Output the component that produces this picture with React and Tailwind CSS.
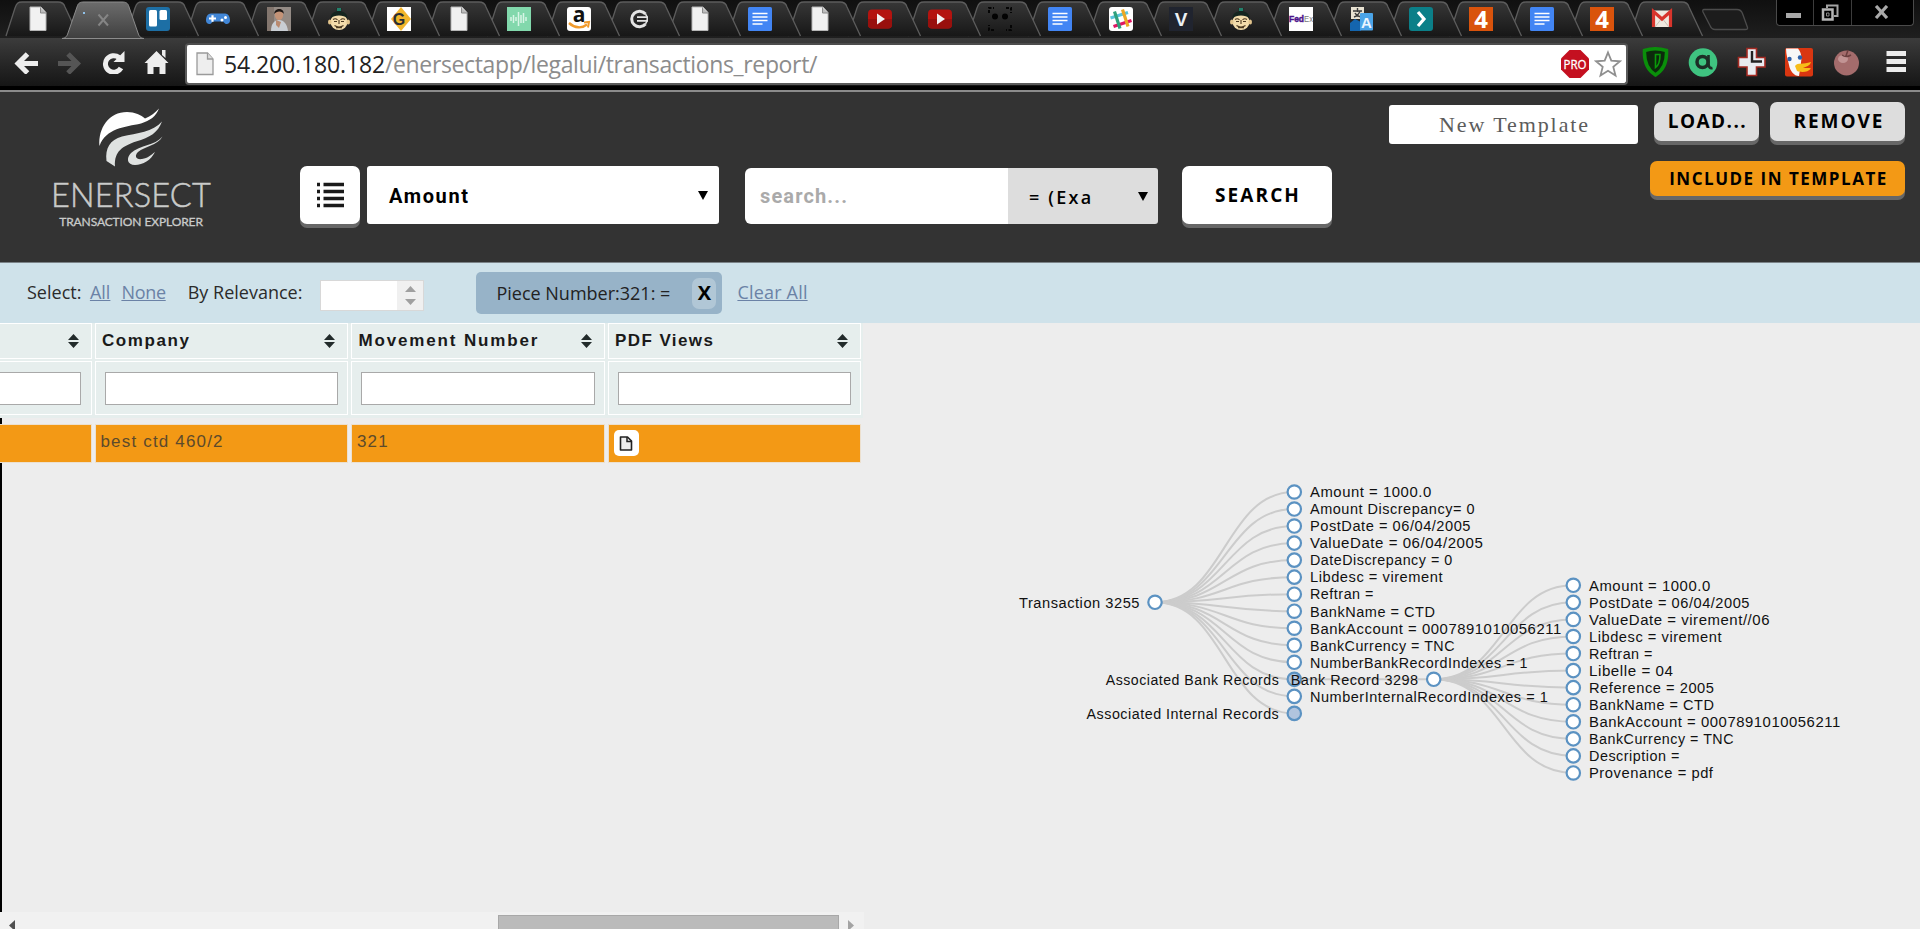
const favSerif = "Liberation Sans, sans-serif";

function PageFav() {
  return (
    <>
      <path d="M4 0h11l5 5.500V23.500H4z" fill="#f1f1f1" stroke="#b5b5b5" strokeWidth="1" />
      <path d="M14.500 0.500v5.500H20" fill="#bdbdbd" stroke="#8a8a8a" strokeWidth="1" />
    </>
  );
}

function DocFav() {
  return (
    <>
      <rect x="0" y="0" width="24" height="24" rx="1.500" fill="#4285f4" />
      <path d="M4.500 6.500h15M4.500 10h15M4.500 13.500h15M4.500 17h10" stroke="#fff" strokeWidth="1.700" />
    </>
  );
}

function YoutubeFav() {
  return (
    <>
      <rect x="0" y="2.500" width="24" height="19" rx="4" fill="#b4130f" />
      <path d="M0 12h24v5.500a4 4 0 0 1-4 4H4a4 4 0 0 1-4-4z" fill="#98100d" />
      <path d="M9 6.500l8 5.500-8 5.500z" fill="#f2f2f2" />
    </>
  );
}

function FaceFav() {
  return (
    <>
      <ellipse cx="12" cy="15" rx="8.500" ry="8" fill="#f3dcab" />
      <ellipse cx="2.800" cy="15" rx="1.800" ry="2.500" fill="#e2c48c" />
      <ellipse cx="21.200" cy="15" rx="1.800" ry="2.500" fill="#e2c48c" />
      <path d="M3.500 11C3.500 6 8 5 10 4l-.5-3h5L14 4c2 1 6.500 2 6.500 7-4-3.500-13-3.500-17 0z" fill="#15251f" />
      <path d="M10 1h4v3h-4z" fill="#23806b" />
      <path d="M6 12.500c1.500-1 3-1 4.500.3M13.500 12.800c1.500-1.300 3-1.300 4.500-.3M7 14.500h3M14 14.500h3M12 13v4M7.500 18.500c3 2 6 2 9 0M9 20.800h6" stroke="#4a3820" strokeWidth="1.100" fill="none" />
    </>
  );
}

function FourFav() {
  return (
    <>
      <rect width="24" height="24" fill="#d9530c" />
      <text x="12" y="20.500" textAnchor="middle" fontSize="24" fontWeight="700" fill="#fff" fontFamily="Open Sans, sans-serif">4</text>
    </>
  );
}

const favs = {
  page: <PageFav />,
  doc: <DocFav />,
  youtube: <YoutubeFav />,
  face: <FaceFav />,
  four: <FourFav />,
  trello: (
    <>
      <rect width="24" height="24" rx="3" fill="#1d6fa5" />
      <rect x="3" y="3" width="8" height="16.500" rx="1.500" fill="#fff" />
      <rect x="13.500" y="3" width="7.500" height="10" rx="1.500" fill="#fff" />
    </>
  ),
  game: (
    <>
      <path d="M5 6.500h14c4 0 5 4 5 7s-3 4.500-5 3l-2-2H7l-2 2c-2 1.500-5 0-5-3s1-7 5-7z" fill="#4186d6" />
      <path d="M3 11.500h7M6.500 8.200v6.600" stroke="#fff" strokeWidth="2.200" />
      <circle cx="16" cy="13" r="1.500" fill="#fff" />
      <circle cx="19.500" cy="10.500" r="1.500" fill="#fff" />
    </>
  ),
  photo: (
    <>
      <rect width="24" height="24" fill="#948b85" />
      <path d="M0 0h7v24H0z" fill="#83766e" />
      <path d="M4 24c0-7 3-11 8-11s8 4 9 11z" fill="#c9ced4" />
      <ellipse cx="12" cy="7.500" rx="4.200" ry="5.500" fill="#c49377" />
      <path d="M7.300 7C7 1 17 0 16.800 7c-1.500-3.500-7.500-3.500-9.500 0z" fill="#1d1715" />
      <path d="M9 13l5 2-2 6-3-3z" fill="#b98a70" />
    </>
  ),
  gdiamond: (
    <>
      <rect width="24" height="24" fill="#fff" />
      <path d="M14 0l10 12-10 12-10-12z" fill="#f3b52c" />
      <text x="12" y="18" textAnchor="middle" fontSize="16" fontWeight="700" fill="#2b2f36" fontFamily={favSerif}>G</text>
    </>
  ),
  wave: (
    <>
      <rect width="24" height="24" fill="#82d8ac" />
      <path d="M4 10v4M6.500 8v8M9 10v4M11.500 5v14M14 8v8M16.500 6v10M19 10v4" stroke="#d8f5e6" strokeWidth="1.500" />
    </>
  ),
  amazon: (
    <>
      <rect width="24" height="24" rx="3" fill="#fff" />
      <text x="12" y="15" textAnchor="middle" fontSize="21" fontWeight="700" fill="#111" fontFamily="Open Sans, sans-serif">a</text>
      <path d="M2 16c6 5.500 13 5.500 18 1.500" stroke="#f19a2b" strokeWidth="2.400" fill="none" />
      <path d="M17 15.500l5-.5-1 5.500" stroke="#f19a2b" strokeWidth="2" fill="none" />
    </>
  ),
  coin: (
    <>
      <path d="M18.500 7A7.800 7.800 0 1 0 18.500 17" fill="none" stroke="#e4e4e4" strokeWidth="3" />
      <path d="M10 10.200h11M10 13.800h11" stroke="#e4e4e4" strokeWidth="1.800" />
      <path d="M18.500 7q2 2.500 1.800 5t-1.800 5" fill="none" stroke="#e4e4e4" strokeWidth="1.500" />
    </>
  ),
  frame: (
    <>
      <path d="M1 6V1h5M18 1h5v5M23 18v5h-5M6 23H1v-5" stroke="#050505" strokeWidth="2" fill="none" strokeDasharray="3 1.500" />
      <circle cx="7" cy="9.500" r="3" fill="#030303" />
      <circle cx="17" cy="9.500" r="3" fill="#030303" />
    </>
  ),
  slack: (
    <>
      <rect width="24" height="24" rx="3" fill="#fff" />
      <path d="M1.500 11L19 5.500" stroke="#5bc4dc" strokeWidth="3.200" />
      <path d="M4.500 19.500L22.500 13.500" stroke="#e01563" strokeWidth="3.200" />
      <path d="M5.500 4.500l5.500 17" stroke="#2fa07c" strokeWidth="3.200" />
      <path d="M13.500 2.500l5.500 17" stroke="#eba826" strokeWidth="3.200" />
    </>
  ),
  vee: (
    <>
      <rect width="24" height="24" fill="#20242f" />
      <text x="12" y="19" textAnchor="middle" fontSize="19" fontWeight="700" fill="#eceff3" fontFamily={favSerif}>V</text>
    </>
  ),
  fedex: (
    <>
      <rect width="24" height="24" fill="#fff" />
      <text x="0" y="15" fontSize="9.500" fontWeight="700" textLength="15" lengthAdjust="spacingAndGlyphs" fill="#4d148c" stroke="#4d148c" strokeWidth="0.500" fontFamily={favSerif}>Fed</text>
      <text x="15" y="15" fontSize="9.500" textLength="9" lengthAdjust="spacingAndGlyphs" fill="#777" fontFamily={favSerif}>Ex</text>
    </>
  ),
  translate: (
    <>
      <path d="M2 0h13v12H2z" fill="#e8e2d2" />
      <path d="M4 4h9M8.500 1v4M5 10c3-1 5-3 6-6M6 6c1 2 3 3.500 6 4" stroke="#3d3d3d" strokeWidth="1.400" fill="none" />
      <path d="M1 24v-8l5-4 6 3v9z" fill="#1465ae" />
      <rect x="11" y="6" width="13" height="17.500" rx="1" fill="#4aa4e8" />
      <text x="17.500" y="21" textAnchor="middle" fontSize="15" fontWeight="700" fill="#eaf5ff" fontFamily={favSerif}>A</text>
    </>
  ),
  chevron: (
    <>
      <rect width="24" height="24" rx="3" fill="#0b7f88" />
      <path d="M9 5l6 7-6 7" stroke="#fff" strokeWidth="3.200" fill="none" />
    </>
  ),
  gmail: (
    <>
      <rect x="2" y="3.500" width="20" height="16.500" fill="#efe9df" />
      <path d="M3.500 20V4.500L12 12l8.500-7.500V20" stroke="#d8352c" strokeWidth="3.200" fill="none" />
      <path d="M5 20l5.500-7M19 20l-5.500-7" stroke="#c8c0b4" strokeWidth="1" />
    </>
  ),
};

const tabs = [
  "page", "active", "trello", "game", "photo", "face", "gdiamond", "page", "wave", "amazon",
  "coin", "page", "doc", "page", "youtube", "youtube", "frame", "doc", "slack", "vee",
  "face", "fedex", "translate", "chevron", "four", "doc", "four", "gmail",
];

function Tab({ kind, index }) {
  const active = kind === "active";
  return (
    <div className="relative flex h-[38px] w-[60.15px] shrink-0 justify-center pt-[7px]" style={{ zIndex: active ? 60 : 40 - index }}>
      <svg className="absolute top-0 -left-[10px] h-[38px] w-[90px] overflow-visible" viewBox="0 0 90 38">
        {active ? (
          <path d="M4 38.500C8 38 9 36 10 33L19 7c1-4 3-5 7-5h38c4 0 6 1 7 5l9 26c1 3 2 5 6 5.500z" fill="url(#tab-active)" stroke="#8c8c8c" strokeWidth="1" />
        ) : (
          <path d="M8 36L17 8c1.500-4.500 3-6 7-6h36c4 0 6 1.500 7 5l13.500 29" fill="url(#tab-idle)" stroke="#5c5c5c" strokeWidth="1.300" />
        )}
      </svg>
      {active ? (
        <svg className="relative h-6 w-10" viewBox="0 0 40 24">
          <rect x="5" y="5" width="2" height="2" fill="#8fc0e8" />
          <path d="M20.500 7.500l9.500 11M30 7.500l-9.500 11" stroke="#858585" strokeWidth="2" />
        </svg>
      ) : (
        <svg className="relative h-6 w-6 overflow-visible" viewBox="0 0 24 24">{favs[kind]}</svg>
      )}
    </div>
  );
}

function TabStrip() {
  return (
    <div className="flex h-[38px] bg-gradient-to-b from-[#101010] to-[#1f1f1f] pl-[8px]">
      <svg className="absolute h-0 w-0">
        <defs>
          <linearGradient id="tab-idle" x1="0" x2="0" y1="0" y2="1">
            <stop offset="0" stopColor="#373737" />
            <stop offset="1" stopColor="#171717" />
          </linearGradient>
          <linearGradient id="tab-active" x1="0" x2="0" y1="0" y2="1">
            <stop offset="0" stopColor="#6c6c6c" />
            <stop offset="1" stopColor="#3f3f3f" />
          </linearGradient>
        </defs>
      </svg>
      {tabs.map((kind, i) => <Tab key={i} kind={kind} index={i} />)}
      <svg className="ml-[9px] h-[38px] w-[48px]" viewBox="0 0 48 38">
        <path d="M3 9.500h33q4 0 5.500 4l5 14q.5 2-2 2H14q-3.500 0-5-4L2 12q-.8-2.500 1-2.500z" fill="#1c1c1c" stroke="#4c4c4c" strokeWidth="1.300" />
      </svg>
      <div className="mr-[6px] ml-auto flex h-[26px] w-[138px] rounded-b-[4px] border border-t-0 border-[#4a4a4a] bg-black">
        <div className="flex w-[37px] border-r border-[#3c3c3c]">
          <div className="mt-[13px] ml-[9px] h-[5px] w-[15px] bg-[#a9a9a9]" />
        </div>
        <div className="flex w-[38px] border-r border-[#3c3c3c]">
          <svg className="mt-[4px] ml-[7px] h-[18px] w-[18px]" viewBox="0 0 18 18">
            <path d="M6 4V1.500h10.500V12H13" fill="none" stroke="#a3a3a3" strokeWidth="2" />
            <path d="M2 5.500h9.500v10H2z" fill="none" stroke="#b5b5b5" strokeWidth="2.500" />
            <path d="M5.500 9h2.500v3H5.500z" fill="none" stroke="#8a8a8a" />
          </svg>
        </div>
        <svg className="mt-[5px] ml-[22px] h-[14px] w-[15px]" viewBox="0 0 15 14">
          <path d="M2 1l11 12M13 1L2 13" stroke="#a9a9a9" strokeWidth="3.200" />
        </svg>
      </div>
    </div>
  );
}

function Toolbar() {
  return (
    <div className="h-[54px] bg-black">
      <div className="flex h-[48px] items-center bg-gradient-to-b from-[#3c3c3c] to-[#161616]">
        <svg className="ml-[14px] h-[24px] w-[156px]" viewBox="0 0 156 24">
          <g fill="none" stroke="#ededed" strokeWidth="5">
            <path d="M24 13.500H4M13.500 4l-9.500 9.500L13.500 23" />
            <path d="M44 13.500h19M54 4l9.500 9.500L54 23" stroke="#555" />
            <path d="M105 7.500a8.300 8.300 0 1 0 2 10.500" />
          </g>
          <path d="M110.500 1v11h-11z" fill="#ededed" />
          <path d="M142.500 1l12 12h-3v11h-6v-7h-6v7h-6V13h-3z" fill="#ededed" />
          <path d="M148 0h3.500v8l-3.500-3z" fill="#ededed" />
        </svg>
        <div className="mt-[4px] ml-[15px] flex h-[42px] w-[1443px] items-center rounded-[4px] border-2 border-[#5a5a5a] border-t-[#4d4d4d] bg-white pl-[9px]">
          <svg className="h-[24px] w-[18px]" viewBox="0 0 18 24">
            <path d="M1 1h10.500l5.500 6v15.500H1z" fill="#eee" stroke="#9a9a9a" strokeWidth="1.300" />
            <path d="M11.500 1v6H17" fill="#ddd" stroke="#9a9a9a" strokeWidth="1.300" />
          </svg>
          <p className="ml-[10px] font-['Open_Sans',sans-serif] text-[23px] leading-none tracking-[-0.360px] whitespace-nowrap text-[#8c8c8c]">
            <span className="tracking-[-0.130px] text-[#222]">54.200.180.182</span>/enersectapp/legalui/transactions_report/
          </p>
          <svg className="ml-auto h-[28px] w-[28px]" viewBox="0 0 28 28">
            <path d="M8.500 0h11L28 8.500v11L19.500 28h-11L0 19.500v-11z" fill="#c41020" />
            <text x="14" y="18.500" textAnchor="middle" fontSize="12" textLength="23" lengthAdjust="spacingAndGlyphs" fill="#fff" stroke="#fff" strokeWidth="0.300" fontFamily="Open Sans, sans-serif">PRO</text>
          </svg>
          <svg className="mr-[4px] ml-[5px] h-[28px] w-[28px]" viewBox="0 0 28 28">
            <path d="M14 2.500l3.300 8.200 8.700.6-6.700 5.600 2.200 8.600-7.500-4.800-7.500 4.800 2.200-8.600L2 11.300l8.700-.6z" fill="#fff" stroke="#8f8f8f" strokeWidth="1.800" />
          </svg>
        </div>
        <svg className="ml-[14px] h-[30px] w-[268px]" viewBox="0 0 268 30">
          <path d="M2.500 3.500Q13 0 24.500 3.500C25 15 22 23 13.500 28 5 23 2 15 2.500 3.500z" fill="#0c2a0c" stroke="#0a8f0a" strokeWidth="3.500" />
          <path d="M13.500 7.500h4.500c0 6-1 11-4.500 13z" fill="none" stroke="#0a9a0a" strokeWidth="1.600" />
          <circle cx="61" cy="15.500" r="14.300" fill="#3fc380" />
          <circle cx="60.500" cy="15" r="5.500" fill="none" stroke="#1d2e26" strokeWidth="3.500" />
          <path d="M66.500 8v9q.5 5 4 4" fill="none" stroke="#1d2e26" strokeWidth="2.600" />
          <path d="M105 1.500h9.500v9h8.500v9.500h-8.500v8.500H105v-8.500H96.500V10.500h8.500z" fill="#e8ebf0" stroke="#a32a22" strokeWidth="1.600" />
          <path d="M110 4v10.500h10" fill="none" stroke="#222" strokeWidth="2.400" />
          <rect x="143" y="1" width="28" height="28.500" rx="2" fill="#d93611" />
          <path d="M144 1.500h12c3 4 4 8 3 14l-2 13.500c-5 0-9-5-10-11-1-5-3-10-3-16.500z" fill="#f7f7f7" />
          <circle cx="147.500" cy="12" r="2.200" fill="#2c5fa8" /><circle cx="158" cy="10.500" r="2.200" fill="#2c5fa8" />
          <path d="M153 19c3-4 8-1 16-4-1 4-5 5-8 5.500 3 1 6 0 8 1-3 4-10 4-14 2.500z" fill="#f7bd18" />
          <circle cx="204.500" cy="16" r="12.500" fill="#a46c6c" />
          <ellipse cx="201" cy="12" rx="5" ry="4" fill="#c29494" />
          <path d="M204 9l2-6M200 8q4 3 9 0" stroke="#6b3f3f" strokeWidth="1.500" fill="none" />
          <path d="M244.500 6.500h19.500M244.500 14.500h19.500M244.500 22.500h19.500" stroke="#ececec" strokeWidth="5" />
        </svg>
      </div>
      <div className="mt-[4px] h-[2px] bg-[#8b8b8b]" />
    </div>
  );
}

function Logo() {
  return (
    <div className="ml-[51px] flex w-[160px] flex-col items-center pt-[16px] font-[Lato,sans-serif] text-[#c9cbca]">
      <svg className="h-[60px] w-[68px]" viewBox="0 0 68 60">
        <path d="M2.500 38C1 20 12 4 30 4c8 0 14 3 18 6.500C54 8 58 5 62 .5c-3 8-9 12-18 15C28 19 9 20 2.500 38z" fill="#fff" />
        <path d="M9.500 53C8 40 13 32 25 28.500 40 25 56 24 65 13.500c-4 11-12 16-26 20C26 38 17 43 18 58.500z" fill="#dfe2e1" />
        <path d="M65.500 28.500C60 38 48 38 41 44c-4 4-2 8 4 7 6-1 9-4 13-7-4 8-12 13-20 13-8 0-9-7-4-12 8-8 24-7 31.500-16.500z" fill="#dfe2e1" />
      </svg>
      <p className="mt-[9px] text-[32.500px] leading-[36px] font-light tracking-[0.200px] whitespace-nowrap [-webkit-text-stroke:0.500px_#c9cbca]">ENERSECT</p>
      <p className="mt-[1px] text-[12px] leading-[16px] font-normal tracking-[-0.100px] whitespace-nowrap [-webkit-text-stroke:0.300px_#c9cbca]">TRANSACTION EXPLORER</p>
    </div>
  );
}

function Arrow() {
  return <svg className="h-[9px] w-[10px]" viewBox="0 0 10 9"><path d="M0 0h10L5 9z" fill="#000" /></svg>;
}

function Header() {
  return (
    <header className="flex h-[170px] bg-[#333] font-['Open_Sans',sans-serif] font-bold text-black">
      <Logo />
      <div className="mt-[74px] ml-[89px] flex h-[58px] items-start">
        <button className="flex h-[58px] w-[60px] items-center justify-center rounded-[7px] bg-white shadow-[0_4px_0_#676767]">
          <svg className="h-[26px] w-[28px]" viewBox="0 0 28 26">
            <path d="M1 2.500h3M1 9.500h3M1 16.500h3M1 23.500h3M7.500 2.500H28M7.500 9.500H28M7.500 16.500H28M7.500 23.500H28" stroke="#1a1a1a" strokeWidth="3.300" />
          </svg>
        </button>
        <div className="ml-[7px] flex h-[58px] w-[352px] items-center justify-between rounded-[3px] bg-white pr-[11px] pl-[22px] font-[Roboto,sans-serif] text-[20px]">
          <span className="pt-[2px] tracking-[1.620px]">Amount</span>
          <Arrow />
        </div>
        <div className="mt-[2px] ml-[26px] flex h-[56px] w-[263px] items-center rounded-l-[6px] bg-white pl-[15px] font-[Roboto,sans-serif] text-[20px] text-[#aaa]">
          <span className="tracking-[1.130px]">search...</span>
        </div>
        <div className="mt-[2px] flex h-[56px] w-[150px] items-center justify-between rounded-r-[3px] bg-[#ddd] pr-[10px] pl-[21px] text-[18px]">
          <span className="pt-[2px] font-semibold tracking-[2.200px]">= (Exa</span>
          <Arrow />
        </div>
        <button className="ml-[24px] flex h-[58px] w-[150px] items-center justify-center rounded-[7px] bg-white pl-[2px] text-[19px] tracking-[2.100px] shadow-[0_4px_0_#676767]">SEARCH</button>
      </div>
      <div className="mt-[10px] mr-[15px] ml-auto flex flex-col items-end">
        <div className="flex items-start">
          <div className="mt-[3px] flex h-[39px] w-[249px] items-center justify-center rounded-[3px] bg-white pl-[2px] font-['Liberation_Serif',serif] text-[22px] font-normal tracking-[1.900px] text-[#5c5c5c]">New Template</div>
          <button className="ml-[16px] flex h-[39px] w-[105px] items-center justify-center rounded-[7px] bg-[#ddd] pl-[2px] text-[19px] tracking-[1.450px] shadow-[0_4px_0_#676767]">LOAD...</button>
          <button className="ml-[11px] flex h-[39px] w-[135px] items-center justify-center rounded-[7px] bg-[#ddd] pl-[3px] text-[19px] tracking-[1.960px] shadow-[0_4px_0_#676767]">REMOVE</button>
        </div>
        <button className="mt-[17px] flex h-[35px] w-[255px] items-center justify-center rounded-[7px] bg-[#f39915] pl-[2px] text-[17px] tracking-[1.510px] shadow-[0_4px_0_#676767]">INCLUDE IN TEMPLATE</button>
      </div>
    </header>
  );
}

function FilterBar() {
  return (
    <div className="flex h-[61px] items-start border-t border-[#7b8388] bg-[#cfe2ea] pt-[9px] font-['Open_Sans',sans-serif] text-[18px] leading-[40px] whitespace-nowrap text-[#2b2b2b]">
      <span className="ml-[27px]">Select:</span>
      <span className="ml-[8.500px] text-[#6b82a6] underline">All</span>
      <span className="ml-[11px] tracking-[-0.300px] text-[#6b82a6] underline">None</span>
      <span className="ml-[22px]">By Relevance:</span>
      <div className="mt-[8px] ml-[18px] flex h-[31px] w-[104px] border border-[#d8d8d8] bg-white">
        <div className="ml-auto flex w-[26px] flex-col items-center gap-[7px] bg-[#f0f0f0] pt-[5px]">
          <svg className="h-[6px] w-[11px]" viewBox="0 0 11 6"><path d="M0 6l5.500-6L11 6z" fill="#a0a0a0" /></svg>
          <svg className="h-[6px] w-[11px]" viewBox="0 0 11 6"><path d="M0 0l5.500 6L11 0z" fill="#a0a0a0" /></svg>
        </div>
      </div>
      <div className="ml-[52px] flex h-[42px] w-[246px] items-center rounded-[5px] bg-[#97b3c8] pl-[20px] text-[#222]">
        Piece Number:321: =
        <div className="mr-[6px] ml-auto flex h-[31px] w-[24px] items-center justify-center rounded-[7px] bg-[#b1c7d6] text-[20px] font-bold text-black">X</div>
      </div>
      <span className="ml-[15px] tracking-[0.190px] text-[#6b82a6] underline">Clear All</span>
    </div>
  );
}

function SortIcon() {
  return (
    <svg className="h-[14px] w-[11px]" viewBox="0 0 11 14">
      <path d="M0 6l5.500-6L11 6zM0 8l5.500 6L11 8z" fill="#222b2b" />
    </svg>
  );
}

const columns = [
  { head: "Company", cell: "best ctd 460/2", tracking: "tracking-[1.590px]" },
  { head: "Movement Number", cell: "321", tracking: "tracking-[1.850px]" },
  { head: "PDF Views", cell: null, tracking: "tracking-[1.420px]" },
];

function Table() {
  return (
    <div className="w-[864px] font-['Liberation_Sans',sans-serif] text-[17px]">
      <div className="flex h-[95px] w-[863px] flex-col gap-[2px] bg-[#e6eeed]">
        <div className="flex h-[36px] gap-[3px] font-bold text-[#1a1a1a]">
          <div className="flex w-[91.500px] items-center justify-end border border-l-0 border-white pr-[12px]"><SortIcon /></div>
          {columns.map((c) => (
            <div key={c.head} className="flex w-[253.500px] items-center justify-between border border-white pr-[12px] pl-[6.500px]">
              <span className={c.tracking}>{c.head}</span>
              <SortIcon />
            </div>
          ))}
        </div>
        <div className="flex h-[54px] gap-[3px]">
          <div className="flex w-[91.500px] items-center border border-l-0 border-white pr-[10px]"><div className="h-[33px] grow border border-l-0 border-[#a9a9a9] bg-white" /></div>
          {columns.map((c) => (
            <div key={c.head} className="flex w-[253.500px] items-center border border-white px-[9px]">
              <div className="h-[33px] grow border border-[#a9a9a9] bg-white" />
            </div>
          ))}
        </div>
      </div>
      <div className="border-l-2 border-black pt-[6px]">
        <div className="-ml-[2px] flex h-[39px] w-[861px] gap-[3px] leading-[34px] tracking-[1.170px] text-[#5c4a2c]">
          <div className="w-[91.500px] border border-l-0 border-[#ece0cf] bg-[#f39915]" />
          {columns.map((c) => (
            <div key={c.head} className="w-[253.500px] border border-[#ece0cf] bg-[#f39915] pl-[5px]">
              {c.cell ? c.cell : (
                <div className="mt-[5px] flex h-[26px] w-[25px] items-center justify-center rounded-[5px] bg-white">
                  <svg className="h-[15px] w-[14px]" viewBox="0 0 14 15">
                    <path d="M1.500 1h7L12.500 5v9h-11z" fill="#eee" stroke="#222" strokeWidth="1.600" strokeLinejoin="round" />
                    <path d="M8 1v4.500h4.500" fill="none" stroke="#222" strokeWidth="1.500" />
                  </svg>
                </div>
              )}
            </div>
          ))}
        </div>
        <div className="h-[449px]" />
      </div>
      <div className="flex h-[17px] w-[864px] overflow-hidden bg-[#f1f1f1]">
        <svg className="mt-[8px] ml-[9px] h-[11px] w-[6px]" viewBox="0 0 6 11"><path d="M6 0v11L0 5.500z" fill="#505050" /></svg>
        <div className="mt-[3px] ml-[483px] h-[16px] w-[341px] border border-[#a8a8a8] bg-[#bbb]" />
        <svg className="mt-[8px] ml-[9px] h-[11px] w-[6px]" viewBox="0 0 6 11"><path d="M0 0v11l6-5.500z" fill="#a3a3a3" /></svg>
      </div>
    </div>
  );
}

const fields = [
  ["Amount = 1000.0", 121.7], ["Amount Discrepancy= 0", 165], ["PostDate = 06/04/2005", 161],
  ["ValueDate = 06/04/2005", 173.3], ["DateDiscrepancy = 0", 142.7], ["Libdesc = virement", 133],
  ["Reftran =", 64], ["BankName = CTD", 125.5], ["BankAccount = 0007891010056211", 251.7],
  ["BankCurrency = TNC", 145], ["NumberBankRecordIndexes = 1", 218],
  ["Associated Bank Records", 173.6, true], ["NumberInternalRecordIndexes = 1", 238.3],
  ["Associated Internal Records", 192.8, true],
];
const bankFields = [
  ["Amount = 1000.0", 121.7], ["PostDate = 06/04/2005", 161], ["ValueDate = virement//06", 181],
  ["Libdesc = virement", 133], ["Reftran =", 64], ["Libelle = 04", 84.5], ["Reference = 2005", 125.5],
  ["BankName = CTD", 125.5], ["BankAccount = 0007891010056211", 251.7], ["BankCurrency = TNC", 145],
  ["Description =", 91], ["Provenance = pdf", 124.5],
];
const rowY = (i) => 493 + i * 17.03;
const bankY = (i) => 586.3 + i * 17.06;
const link = (x1, y1, x2, y2) => {
  const m = (x1 + x2) / 2;
  return `M${x1} ${y1}C${m} ${y1} ${m} ${y2} ${x2} ${y2}`;
};

function Node({ x, y, label, width, before, filled }) {
  return (
    <g>
      <circle cx={x} cy={y} r="6.700" fill={filled ? "#b0c4de" : "#fff"} stroke="#5b92c2" strokeWidth="2.200" />
      <text x={before ? x - 15 - width : x + 15.7} y={y + 5.3} textLength={width} lengthAdjust="spacingAndGlyphs">{label}</text>
    </g>
  );
}

function Tree() {
  return (
    <svg className="h-[605px] w-[1056px]" viewBox="864 324 1056 605" fontFamily="Liberation Sans, Arial, sans-serif" fontSize="13.800" letterSpacing="0.500" fill="#111">
      <g fill="none" stroke="#ccc" strokeWidth="2">
        {fields.map((f, i) => <path key={f[0]} d={link(1155, 603.3, 1294.3, rowY(i))} />)}
        <path d={link(1294.3, 680.3, 1433.7, 680.3)} />
        {bankFields.map((f, i) => <path key={f[0]} d={link(1433.7, 680.3, 1573.3, bankY(i))} />)}
      </g>
      <Node x={1155} y={603.3} label="Transaction 3255" width={121} before />
      {fields.map((f, i) => <Node key={f[0]} x={1294.3} y={rowY(i)} label={f[0]} width={f[1]} before={!!f[2]} filled={!!f[2]} />)}
      <Node x={1433.7} y={680.3} label="Bank Record 3298" width={128} before />
      {bankFields.map((f, i) => <Node key={f[0]} x={1573.3} y={bankY(i)} label={f[0]} width={f[1]} />)}
    </svg>
  );
}

export default function App() {
  return (
    <div className="h-[929px] w-[1920px] overflow-hidden bg-[#ededed]">
      <TabStrip />
      <Toolbar />
      <Header />
      <FilterBar />
      <div className="flex">
        <Table />
        <Tree />
      </div>
    </div>
  );
}
